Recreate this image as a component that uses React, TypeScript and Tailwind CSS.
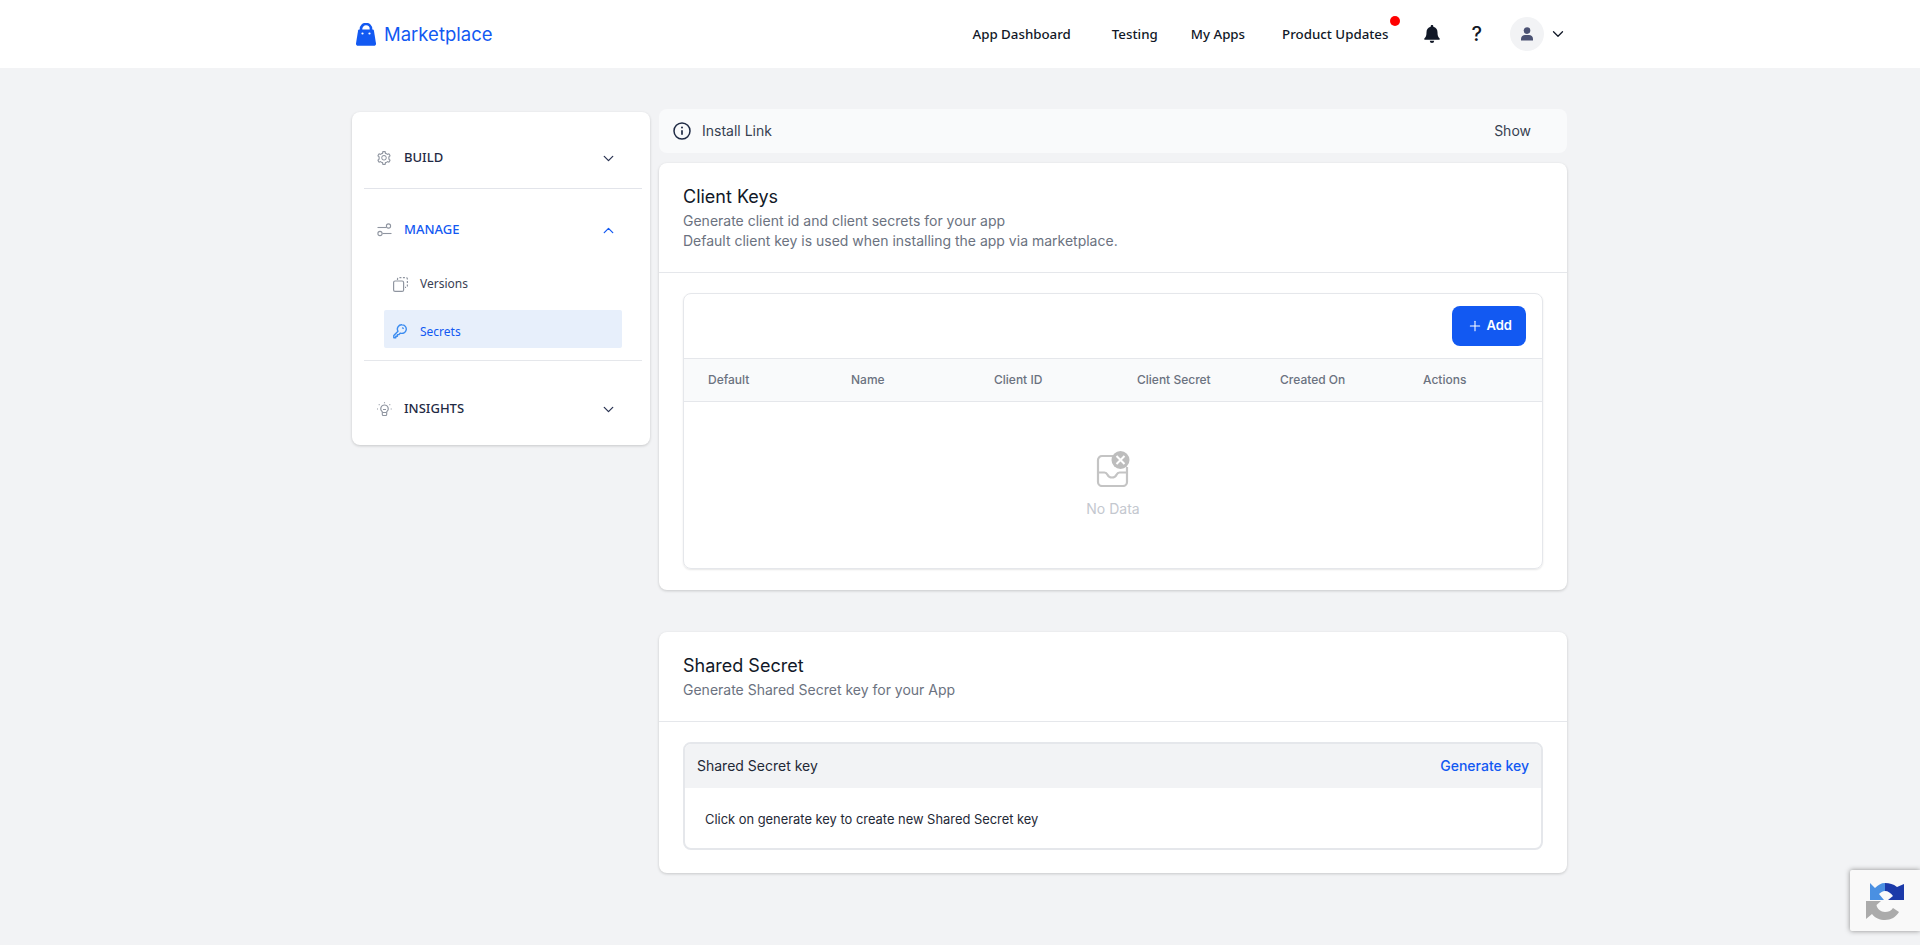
import { ChevronDown, ChevronUp, Plus } from "lucide-react";
import { AiOutlineSetting } from "react-icons/ai";

const inter = "font-['Inter',sans-serif]";

function BagIcon() {
  return (
    <svg width="20" height="23" viewBox="0 0 20 23" className="shrink-0">
      <path d="M5 8V6a5 5 0 0 1 10 0v2" fill="none" stroke="#1259f2" strokeWidth="2.6" />
      <path d="M3.2 6.5h13.6c.6 0 1 .4 1.1 1L20 20.5c.1 1.4-.7 2.2-2 2.2H2c-1.3 0-2.1-.8-2-2.2L2.100 7.500c.1-.6.5-1 1.100-1z" fill="#1259f2" />
      <circle cx="6.500" cy="10.500" r="1.100" fill="#fff" />
      <circle cx="13.500" cy="10.500" r="1.100" fill="#fff" />
    </svg>
  );
}

function SlidersIcon() {
  return (
    <svg width="15" height="14" viewBox="0 0 15 14" fill="none" stroke="#8f95a0" strokeWidth="1.1" className="shrink-0">
      <path d="M0.500 4.500H9.500" />
      <circle cx="11.500" cy="3" r="2.100" />
      <path d="M5.500 10.500H14.500" />
      <circle cx="3" cy="10.500" r="2.100" />
    </svg>
  );
}

function VersionsIcon() {
  return (
    <svg width="15" height="15" viewBox="0 0 15 15" fill="none" stroke="#8f95a0" strokeWidth="1.2" className="shrink-0">
      <rect x="0.600" y="4" width="10" height="10.400" rx="1.500" />
      <path d="M4.500 3V2A1.400 1.400 0 0 1 5.900 .600H13A1.400 1.400 0 0 1 14.400 2V9A1.400 1.400 0 0 1 13 10.400H12" strokeDasharray="2 1.500" />
    </svg>
  );
}

function KeyIcon() {
  return (
    <svg width="14" height="15" viewBox="0 0 14 15" fill="none" stroke="#3b8cf0" strokeWidth="1.400" className="shrink-0">
      <path d="M9 .8a4.300 4.300 0 1 1-1.600 8.300L6 10.600H4.400V12.200H2.800V13.800H.8V11.600L5 7.300A4.300 4.300 0 0 1 9 .8z" strokeLinejoin="round" />
      <path d="M9.300 3.500l1.300 1.300" />
    </svg>
  );
}

function BulbIcon() {
  return (
    <svg width="15" height="15" viewBox="0 0 15 15" fill="none" stroke="#8f95a0" strokeWidth="1.100" className="shrink-0">
      <path d="M7.500 3a3.700 3.700 0 0 0-2.200 6.700V12.500c0 .6.400 1 1 1h2.400c.6 0 1-.4 1-1V9.700A3.700 3.700 0 0 0 7.500 3z" />
      <path d="M5.500 10.500h4M6 7.500h3" />
      <path d="M7.500 .2v1.300M1.800 2.300l1 1M13.200 2.300l-1 1M0 7h1.300M13.700 7H15" strokeDasharray="1 .5" />
    </svg>
  );
}

function BellIcon() {
  return (
    <svg width="16" height="18" viewBox="0 0 16 18" fill="#111827" className="shrink-0">
      <path d="M8 0c.8 0 1.300.5 1.300 1.300v.5c2.700.6 4.200 2.800 4.200 5.500 0 3 .5 4.700 2.100 6.100.5.500.2 1.300-.5 1.300H.900c-.7 0-1-.8-.5-1.300 1.600-1.400 2.100-3.100 2.100-6.100 0-2.700 1.500-4.900 4.200-5.500v-.5C6.700.5 7.200 0 8 0z" />
      <path d="M5.800 15.800h4.400a2.200 2.200 0 0 1-4.400 0z" />
    </svg>
  );
}

function UserIcon() {
  return (
    <svg width="14" height="14" viewBox="0 0 14 14" fill="#4b5273">
      <circle cx="7" cy="3.600" r="3.300" />
      <path d="M1 13.500v-1.600C1 9.400 3 8 5 8h4c2 0 4 1.400 4 3.900v1.600z" />
    </svg>
  );
}

function InfoIcon() {
  return (
    <svg width="18" height="18" viewBox="0 0 18 18" fill="none" stroke="#1f2a44" strokeWidth="1.500" className="shrink-0">
      <circle cx="9" cy="9" r="8" />
      <path d="M9 8.200v4.600" strokeWidth="1.700" />
      <circle cx="9" cy="5.500" r="1" fill="#1f2a44" stroke="none" />
    </svg>
  );
}

function EmptyIcon() {
  return (
    <svg width="34" height="36" viewBox="0 0 34 36" fill="none" className="shrink-0">
      <path d="M18 5H6a4 4 0 0 0-4 4v22a4 4 0 0 0 4 4h21a4 4 0 0 0 4-4V16" stroke="#c4c4c4" strokeWidth="2.200" />
      <path d="M2.500 21.500h6c1.500 0 2.300.8 3 2.200.9 1.900 2.300 2.800 4.500 2.800s3.600-.9 4.500-2.800c.7-1.400 1.500-2.200 3-2.200h7" stroke="#c4c4c4" strokeWidth="2.200" />
      <circle cx="24.500" cy="9" r="9" fill="#bdbdbd" />
      <path d="M20.500 5l8 8M28.500 5l-8 8" stroke="#fff" strokeWidth="2" />
    </svg>
  );
}

function RecaptchaIcon() {
  return (
    <svg width="38" height="38" viewBox="0 0 38 38">
      <path d="M4 1L9 6C12 3 15 1 19 1V9C16.500 9 14.500 10.500 13 12L18 18H4Z" fill="#4a90e2" />
      <path d="M19 1C24 1 27 2 31 5L38 2V18H22L27 14C25 11 22 9 19 9Z" fill="#1c3aa9" />
      <path d="M0 19H15L10.500 23C11 27 15 30 19 30C22 30 25 29 27 26L33 30C30 35 25 38 19 38C14 38 9 36 6 32L0 37Z" fill="#ababab" />
    </svg>
  );
}

function SideHeader({ icon, label, active, open }: { icon: React.ReactNode; label: string; active?: boolean; open?: boolean }) {
  return (
    <div className="flex h-[40px] items-center pl-[25px] pr-[33px]">
      <span className="flex w-[27px] shrink-0 items-center">{icon}</span>
      <span className={`flex-1 font-['Noto_Sans',sans-serif] text-[13px] font-medium ${active ? "text-[#1259f2]" : "text-[#1f2a44]"}`}>{label}</span>
      {open ? (
        <ChevronUp size={17} strokeWidth={1.8} className="text-[#1259f2]" />
      ) : (
        <ChevronDown size={17} strokeWidth={1.8} className="text-[#2a3352]" />
      )}
    </div>
  );
}

const columns = ["Default", "Name", "Client ID", "Client Secret", "Created On", "Actions"];

function Sidebar() {
  return (
    <aside className="mt-[3px] w-[298px] shrink-0 rounded-lg bg-white shadow-[0_1px_3px_rgba(0,0,0,0.18)]">
      <div className="pt-[26px]">
        <SideHeader icon={<AiOutlineSetting size={16} className="-ml-px text-[#8f95a0]" />} label="BUILD" />
      </div>
      <div className="ml-3 mr-2 mt-[10px] h-px bg-[#e2e4ea]" />
      <div className="mt-[21px]">
        <SideHeader icon={<SlidersIcon />} label="MANAGE" active open />
      </div>
      <div className="mt-[15px] flex h-[38px] items-center px-[41px]">
        <span className="flex w-[27px] items-center"><VersionsIcon /></span>
        <span className="font-['Noto_Sans',sans-serif] text-[12px] text-[#3a4255]">Versions</span>
      </div>
      <div className="ml-8 mr-[28px] mt-[7px] flex h-[38px] items-center rounded-[2px] bg-[#e7effb] px-[9px] pt-[5px]">
        <span className="flex w-[27px] items-center"><KeyIcon /></span>
        <span className="font-['Noto_Sans',sans-serif] text-[12px] text-[#1259f2]">Secrets</span>
      </div>
      <div className="ml-3 mr-2 mt-3 h-px bg-[#e5e7eb]" />
      <div className="mt-[28px] pb-[16px]">
        <SideHeader icon={<BulbIcon />} label="INSIGHTS" />
      </div>
    </aside>
  );
}

function CardHeader({ title, lines }: { title: string; lines: string[] }) {
  return (
    <div className="border-b border-[#e5e7eb] px-6 pb-[21px] pt-[22px]">
      <h2 className="mb-[2px] text-[18px] leading-[24px] text-[#111827]">{title}</h2>
      {lines.map((l) => (
        <p key={l} className="text-[14px] leading-5 text-[#6b7280]">{l}</p>
      ))}
    </div>
  );
}

export default function App() {
  return (
    <div className={`relative h-[945px] overflow-hidden bg-[#f2f3f5] ${inter}`}>
      <header className="h-[68px] bg-white">
        <div className="mx-auto flex h-full w-[1216px] items-center pl-1">
          <BagIcon />
          <span className="ml-[8px] pt-[2px] text-[18.5px] text-[#1259f2]">Marketplace</span>
          <nav className="ml-auto flex items-center pt-[2px] font-['Noto_Sans',sans-serif] text-[13.3px] font-medium text-[#111827]">
            <span>App Dashboard</span>
            <span className="ml-[41px]">Testing</span>
            <span className="ml-[33px]">My Apps</span>
            <span className="relative ml-[37px]">
              Product Updates
              <span className="absolute -right-3 -top-[9px] h-[10px] w-[10px] rounded-full bg-[#ff0000]" />
            </span>
          </nav>
          <span className="ml-9"><BellIcon /></span>
          <span className="ml-[31px] text-[20px] font-medium leading-none text-[#111827]">?</span>
          <span className="ml-[28px] flex h-[34px] w-[34px] items-center justify-center rounded-full bg-[#f2f3f5]"><UserIcon /></span>
          <ChevronDown size={18} strokeWidth={1.7} className="ml-[5px] mr-px text-[#111827]" />
        </div>
      </header>

      <main className="mx-auto flex w-[1216px] items-start gap-[9px] pt-[41px]">
        <Sidebar />
        <div className="w-[908px] shrink-0">
          <div className="flex h-[44px] items-center rounded-lg bg-[#f9fafb] pl-[14px] pr-9 text-[14px]">
            <InfoIcon />
            <span className="ml-[11px] pb-[2px] text-[#374151]">Install Link</span>
            <span className="ml-auto pb-[2px] text-[#374151]">Show</span>
          </div>

          <section className="mt-[10px] rounded-lg bg-white shadow-[0_1px_3px_rgba(0,0,0,0.18)]">
            <CardHeader
              title="Client Keys"
              lines={["Generate client id and client secrets for your app", "Default client key is used when installing the app via marketplace."]}
            />
            <div className="p-[20px_24px_21px]">
              <div className="overflow-hidden rounded-lg border border-[#e5e7eb] shadow-[0_1px_2px_rgba(0,0,0,0.1)]">
                <div className="flex h-[64px] items-center justify-end pr-4">
                  <button className="flex h-10 items-center gap-1 rounded-lg bg-[#1259f2] pl-[15px] pr-[14px] text-[13px] font-semibold text-white">
                    <Plus size={16} strokeWidth={1.6} />
                    Add
                  </button>
                </div>
                <div className="grid h-[44px] grid-cols-6 items-center border-y border-[#e5e7eb] bg-[#f9fafb] text-[12px] font-medium text-[#6b7280]">
                  {columns.map((c) => (
                    <span key={c} className="pl-6">{c}</span>
                  ))}
                </div>
                <div className="flex h-[166px] flex-col items-center pt-[49px]">
                  <EmptyIcon />
                  <span className="mt-[11px] text-[14px] text-[#c4c8cf]">No Data</span>
                </div>
              </div>
            </div>
          </section>

          <section className="mt-[42px] rounded-lg bg-white shadow-[0_1px_3px_rgba(0,0,0,0.18)]">
            <CardHeader title="Shared Secret" lines={["Generate Shared Secret key for your App"]} />
            <div className="p-[20px_24px_23px]">
              <div className="overflow-hidden rounded-lg border-2 border-[#e5e7eb]">
                <div className="flex h-[44px] items-center justify-between bg-[#f2f3f5] pb-px pl-3 pr-3 text-[14px]">
                  <span className="text-[#1f2937]">Shared Secret key</span>
                  <span className="font-medium text-[#1259f2]">Generate key</span>
                </div>
                <div className="flex h-[60px] items-center pl-5 pt-[3px] text-[12.9px] text-[#1f2937]">
                  Click on generate key to create new Shared Secret key
                </div>
              </div>
            </div>
          </section>
        </div>
      </main>

      <div className="absolute left-[1850px] top-[870px] flex h-[61px] w-[70px] items-center rounded-l-[2px] bg-[#f9f9f9] pl-4 shadow-[0_0_5px_rgba(128,128,128,0.9)]">
        <RecaptchaIcon />
      </div>
    </div>
  );
}
